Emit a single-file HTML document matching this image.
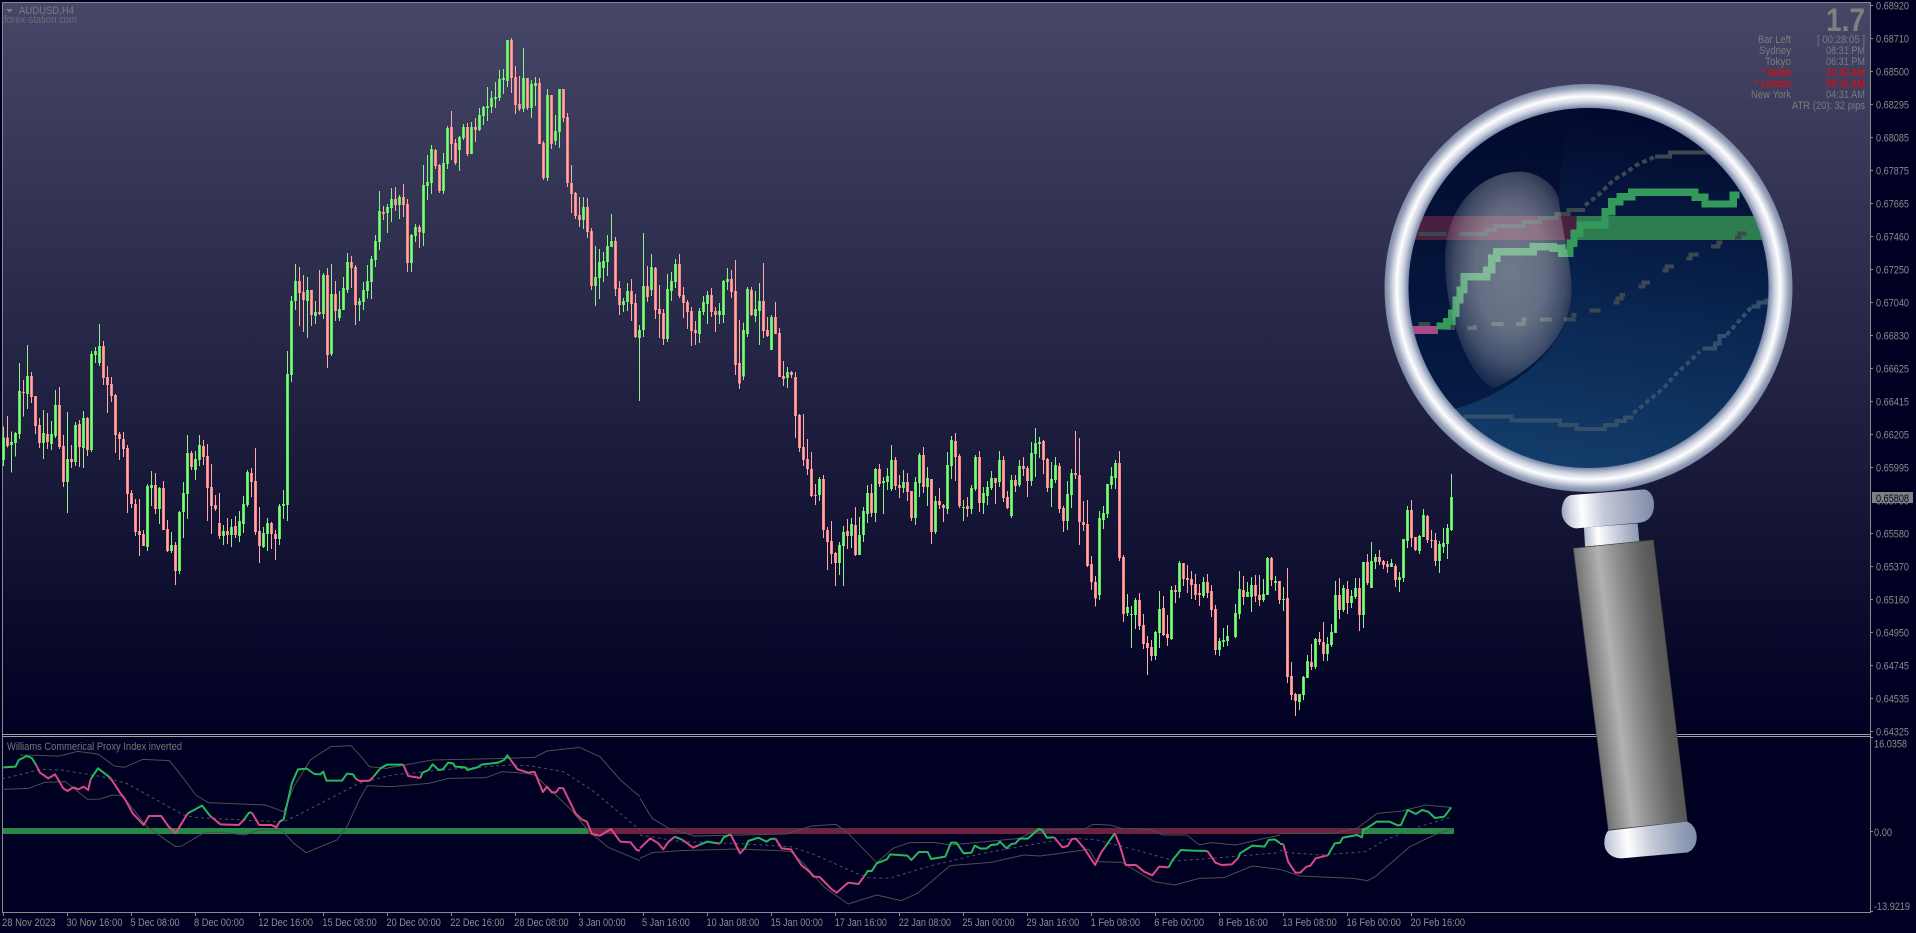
<!DOCTYPE html>
<html><head><meta charset="utf-8"><title>AUDUSD,H4</title>
<style>
html,body{margin:0;padding:0;background:#000022;width:1916px;height:933px;overflow:hidden}
svg{display:block;position:absolute;left:0;top:0}
text{font-family:"Liberation Sans",sans-serif;font-size:11px;fill:#8d8d8d}
.c path{fill:none;shape-rendering:crispEdges}
.gb{stroke:#56e856;stroke-width:9}
.rb{stroke:#f98484;stroke-width:9}
.gw{stroke:#8cf08c;stroke-width:3}
.rw{stroke:#ffaaaa;stroke-width:3}
.i path{fill:none;vector-effect:non-scaling-stroke;stroke-linejoin:round}
.p{stroke:#d94a84;stroke-width:2}
.g{stroke:#28b85c;stroke-width:2}
.o{stroke:#4e4e4e;stroke-width:1}
.d{stroke:#525252;stroke-width:1;stroke-dasharray:3 3}
.t text{fill:#7c7c7c;text-anchor:end}
.t .r{fill:#ff0000}
</style></head><body>
<svg width="1916" height="933" viewBox="0 0 1916 933" xmlns="http://www.w3.org/2000/svg">
<defs>
<linearGradient id="bg" x1="0" y1="3" x2="0" y2="735" gradientUnits="userSpaceOnUse"><stop offset="0" stop-color="#464666"/><stop offset="1" stop-color="#000022"/></linearGradient>
<linearGradient id="glass" x1="800" y1="90" x2="640" y2="1160" gradientUnits="userSpaceOnUse"><stop offset="0" stop-color="#03082c"/><stop offset=".45" stop-color="#07204a"/><stop offset="1" stop-color="#133c6a"/></linearGradient>
<linearGradient id="dark" x1="0" y1="80" x2="0" y2="1000" gradientUnits="userSpaceOnUse"><stop offset="0" stop-color="#030a2e"/><stop offset="1" stop-color="#051c44"/></linearGradient>
<radialGradient id="moon" cx=".52" cy=".45" r=".62"><stop offset="0" stop-color="#dedede" stop-opacity=".5"/><stop offset=".45" stop-color="#dedede" stop-opacity=".44"/><stop offset=".7" stop-color="#dedede" stop-opacity=".28"/><stop offset=".85" stop-color="#dedede" stop-opacity=".12"/><stop offset="1" stop-color="#dedede" stop-opacity="0"/></radialGradient>
<radialGradient id="ring" cx="1588.5" cy="288" r="204" gradientUnits="userSpaceOnUse"><stop offset=".865" stop-color="#5f7299"/><stop offset=".885" stop-color="#7d8caa"/><stop offset=".91" stop-color="#c8cede"/><stop offset=".94" stop-color="#ffffff"/><stop offset=".96" stop-color="#d0d5e0"/><stop offset=".98" stop-color="#9aa4ba"/><stop offset="1" stop-color="#7b88a6"/></radialGradient>
<linearGradient id="h1" x1="65" y1="95" x2="342" y2="75" gradientUnits="userSpaceOnUse"><stop offset="0" stop-color="#9aa3bc"/><stop offset=".1" stop-color="#d5d9e5"/><stop offset=".22" stop-color="#ffffff"/><stop offset=".45" stop-color="#c5cad8"/><stop offset=".75" stop-color="#a0a8be"/><stop offset="1" stop-color="#7e8aa8"/></linearGradient>
<linearGradient id="h2" x1="132" y1="170" x2="298" y2="158" gradientUnits="userSpaceOnUse"><stop offset="0" stop-color="#b0b8cc"/><stop offset=".25" stop-color="#ffffff"/><stop offset=".6" stop-color="#c8cddb"/><stop offset="1" stop-color="#8c96b0"/></linearGradient>
<linearGradient id="h3" x1="100" y1="205" x2="338" y2="175" gradientUnits="userSpaceOnUse"><stop offset="0" stop-color="#727272"/><stop offset=".12" stop-color="#8c8c8c"/><stop offset=".3" stop-color="#b2b2b2"/><stop offset=".55" stop-color="#8a8a8a"/><stop offset=".85" stop-color="#606060"/><stop offset="1" stop-color="#565652"/></linearGradient>
<linearGradient id="h4" x1="193" y1="1095" x2="470" y2="1070" gradientUnits="userSpaceOnUse"><stop offset="0" stop-color="#b8c0d4"/><stop offset=".25" stop-color="#ffffff"/><stop offset=".5" stop-color="#c8ccd8"/><stop offset=".8" stop-color="#97a2ba"/><stop offset="1" stop-color="#7f8dac"/></linearGradient>
<clipPath id="gc"><circle cx="1588" cy="288" r="180.5"/></clipPath>
</defs>

<rect width="1916" height="933" fill="#000022"/>
<rect x="3" y="3" width="1867" height="731" fill="url(#bg)"/>

<!-- frame -->
<g fill="#8a8a8a" shape-rendering="crispEdges">
<rect x="2" y="2" width="1869" height="1"/>
<rect x="2" y="2" width="1" height="911"/>
<rect x="1870" y="2" width="1" height="911"/>
<rect x="2" y="734" width="1869" height="1" fill="#a0a0a0"/>
<rect x="2" y="736" width="1869" height="1" fill="#a0a0a0"/>
<rect x="2" y="912" width="1869" height="1"/>
</g>

<!-- candles -->
<g class="c" transform="translate(.1667 250) scale(.333333)">
<path class="gb" d="M10 562V630M34 576V585M46 549V579M58 423V552M82 378V432M130 549V579M154 552V582M166 465V558M202 627V696M226 525V636M250 504V594M274 312V600M286 303V315M298 288V339M442 708V891M454 705V714M478 714V777M514 885V903M538 786V963M550 729V786M562 609V732M586 627V660M598 585V630M670 843V858M694 831V855M718 813V858M730 762V822M742 666V765M790 849V891M802 819V852M838 768V867M850 762V768M862 372V765M874 153V375M886 93V153M922 120V153M946 186V198M970 75V192M994 132V312M1018 177V204M1030 114V180M1042 36V120M1078 153V165M1090 120V156M1102 93V123M1114 27V96"/>
<path class="rb" d="M22 562V588M70 426V429M94 378V441M106 438V528M118 525V579M142 552V576M178 465V591M190 588V696M214 627V636M238 522V591M262 504V600M310 288V384M322 381V405M334 402V438M346 435V555M358 552V567M370 567V597M382 594V732M394 729V762M406 762V846M418 843V855M430 852V888M466 705V777M490 714V840M502 837V903M526 885V963M574 609V651M610 588V621M622 618V714M634 711V768M646 765V777M658 819V858M682 843V855M706 828V855M754 669V696M766 693V846M778 843V888M814 819V852M826 852V867M898 93V129M910 126V150M934 120V195M958 186V192M982 75V315M1006 132V183M1054 36V54M1066 51V165"/>
<path class="gw" d="M10 530V648M34 544V668M46 546V620M58 339V567M82 285V477M130 480V627M154 513V600M166 420V564M202 486V789M226 516V648M250 483V654M274 303V606M286 291V339M298 222V348M442 702V903M454 663V768M478 711V822M514 846V909M538 783V972M550 696V864M562 555V807M586 603V690M598 555V648M670 825V885M694 807V891M718 783V876M730 738V849M742 660V771M790 831V894M802 804V903M838 762V885M850 720V807M862 303V813M874 138V396M886 42V180M922 81V264M946 153V222M970 69V207M994 42V318M1018 123V213M1030 81V180M1042 9V129M1078 144V213M1090 96V180M1102 45V145M1114 18V147"/>
<path class="rw" d="M22 498V592M70 390V500M94 366V459M106 438V552M118 504V594M142 489V597M178 411V597M190 555V711M214 585V654M238 510V651M262 501V618M310 273V405M322 348V489M334 381V456M346 432V609M358 546V630M370 546V621M382 585V789M394 720V774M406 747V858M418 747V918M430 840V888M466 669V792M490 693V840M502 810V906M526 876V1005M574 603V660M610 570V645M622 582V813M634 642V852M646 735V783M658 729V867M682 804V882M706 798V864M754 654V741M766 594V855M778 771V939M814 816V897M826 840V930M898 51V228M910 75V246M934 120V228M958 60V195M982 54V354M1006 93V213M1054 18V114M1066 45V225"/>
</g>
<g class="c" transform="translate(.1667 0) scale(.333333)">
<path class="gb" d="M1126 723V780M1138 633V726M1162 621V639M1174 597V624M1198 591V615M1234 705V789M1246 681V708M1270 555V699M1282 546V558M1294 447V549M1330 489V573M1342 384V492M1378 411V450M1390 381V414M1414 381V462M1438 345V390"/>
<path class="rb" d="M1150 636V642M1186 597V615M1210 591V615M1222 612V789M1258 681V696M1306 450V498M1318 495V573M1354 381V432M1366 429V489M1402 381V462M1426 381V390"/>
<path class="gw" d="M1126 705V801M1138 573V750M1162 612V699M1174 564V666M1198 585V657M1234 702V816M1246 672V726M1270 495V738M1282 465V600M1294 435V582M1330 459V582M1342 378V507M1378 408V513M1390 372V420M1414 366V462M1438 324V393"/>
<path class="rw" d="M1150 618V660M1186 561V633M1210 552V651M1222 597V816M1258 675V744M1306 447V507M1318 492V579M1354 333V480M1366 417V495M1402 369V468M1426 354V426"/>
</g>
<g class="c" transform="translate(480.1667 30) scale(.333333)">
<path class="gb" d="M10 231V258M22 228V234M34 204V231M46 201V207M58 147V204M70 144V150M82 30V153M130 144V237M154 162V234M166 159V168M202 195V444M226 303V333M238 177V306M310 531V570M346 741V768M358 696V744M370 693V714M382 648V696M394 633V651M430 813V825M442 783V816M478 900V924M490 768V900M514 711V780M562 777V927M574 753V783M586 702V756M658 843V912M670 816V846M682 795V822M718 843V855M730 753V855M742 747V756M790 900V1040M802 777V912M826 837V858M838 813V843M874 861V960"/>
<path class="rb" d="M94 30V144M106 141V225M118 222V237M142 144V234M178 159V342M190 339V444M214 195V342M250 177V264M262 261V459M274 459V492M286 489V558M298 555V570M322 531V606M334 603V768M406 633V777M418 774V825M454 783V822M466 819V921M502 768V801M526 714V840M538 837V852M550 849V927M598 702V798M610 795V819M622 816V846M634 843V903M646 900V909M694 795V846M706 843V855M754 747V786M766 783V1005M778 999V1060M814 780V855M850 813V903M862 900V918M886 861V912M898 909V1041"/>
<path class="gw" d="M10 228V285M22 171V273M34 183V249M46 156V234M58 120V213M70 117V192M82 30V171M130 54V246M154 150V264M166 141V228M202 177V453M226 255V345M238 177V354M310 501V597M346 648V828M358 657V807M370 666V756M382 615V738M394 552V651M430 804V846M442 759V843M478 885V1113M490 609V921M514 672V798M562 732V936M574 726V813M586 687V774M658 834V939M670 798V855M682 783V882M718 819V882M730 750V879M742 714V780M790 877V1050M802 771V921M826 783V876M838 759V945M874 855V960"/>
<path class="rw" d="M94 24V189M106 108V252M118 138V243M142 144V240M178 144V342M190 333V450M214 195V357M250 177V276M262 249V471M274 405V549M286 486V567M298 501V591M322 504V624M334 594V780M406 621V798M418 753V855M454 747V873M466 792V924M502 708V816M526 711V867M538 765V924M550 837V945M598 672V804M610 771V864M622 810V897M634 831V948M646 873V945M694 774V861M706 831V906M754 720V804M766 690V1035M778 870V1077M814 771V858M850 699V924M862 861V921M886 816V912M898 894V1041"/>
</g>
<g class="c" transform="translate(780.1667 250) scale(.333333)">
<path class="gb" d="M22 366V384M118 687V735M178 885V939M190 846V888M214 822V858M238 855V915M250 783V855M262 729V792M286 657V789M310 693V699M322 678V696M334 630V717M370 696V714M406 696V804M418 615V699M442 684V711M466 753V846M502 645V777M514 570V648M550 771V774M574 714V777M586 621V717M610 729V759M622 711V738M634 684V714M658 630V696M694 690V798M718 648V705M754 609V693M766 579V612M778 576V582M814 687V714M826 645V690M862 732V813M874 669V735M958 804V1035"/>
<path class="rb" d="M10 378V387M34 366V375M46 381V498M58 495V594M70 591V630M82 627V657M94 657V738M106 735V738M130 687V840M142 840V876M154 873V912M166 909V939M202 843V858M226 825V915M274 729V789M298 657V702M346 630V708M358 705V714M382 696V726M394 723V804M430 615V711M454 687V846M478 753V765M490 765V774M526 573V621M538 618V768M562 768V777M598 621V759M646 684V699M670 630V744M682 741V774M706 690V708M730 648V657M742 654V693M790 573V630M802 627V714M838 648V777M850 774V813M886 669V675M898 675V816M910 816V825M922 822V948M934 942V996M946 996V1045"/>
<path class="gw" d="M22 351V414M118 681V753M178 876V975M190 828V1008M214 804V894M238 801V915M250 771V876M262 705V819M286 654V816M310 681V792M322 654V720M334 585V723M370 660V729M406 681V825M418 609V741M442 651V768M466 738V852M502 606V792M514 558V687M550 750V813M574 705V792M586 615V723M610 711V792M622 693V765M634 663V720M658 603V711M694 675V804M718 630V711M754 576V708M766 534V681M778 561V624M814 636V771M826 621V699M862 693V840M874 657V774M958 783V1050"/>
<path class="rw" d="M10 333V408M34 363V384M46 366V564M58 492V606M70 492V648M82 567V675M94 606V741M106 702V765M130 675V864M142 831V960M154 813V942M166 906V1008M202 807V897M226 771V918M274 702V801M298 642V711M346 621V720M358 675V744M382 669V753M394 723V813M430 591V729M454 687V882M478 714V777M490 762V816M526 549V693M538 612V774M562 741V801M598 603V786M646 684V762M670 618V756M682 723V777M706 675V726M730 621V678M742 648V741M790 570V672M802 624V726M838 639V789M850 768V846M886 543V687M898 564V885M910 753V843M922 750V951M934 918V1020M946 978V1070"/>
</g>
<g class="c" transform="translate(1100.1667 420) scale(.333333)">
<path class="gb" d="M10 279V300M22 192V282M34 168V195M46 129V174M82 561V579M94 582V585M106 540V585M166 636V708M178 567V639M214 510V657M238 429V516M310 486V528M358 663V690M370 660V666M382 648V663M406 579V651M418 507V582M442 516V531M454 495V531M490 522V540M502 414V525M526 483V489M550 537V540M598 822V846M610 771V825M622 723V774M646 657V741M682 672V702M694 636V675M706 525V639M730 504V570M754 528V549M766 504V531M790 426V585M814 423V504M826 411V426M874 429V441M898 471V480M910 357V474M922 270V363M958 348V393M970 285V351M1018 372V423M1030 369V381M1042 324V372M1054 231V330"/>
<path class="rb" d="M58 129V414M70 411V582M118 540V618M130 615V672M142 669V684M154 681V708M190 564V645M202 642V654M226 510V516M250 429V477M262 474V480M274 477V495M286 492V525M298 519V525M322 486V519M334 513V570M346 567V690M430 510V531M466 495V528M478 525V540M514 414V480M538 483V540M562 534V771M574 768V825M586 822V843M634 726V741M658 657V666M670 666V702M718 525V570M742 507V549M778 504V585M802 426V489M838 411V426M850 423V435M862 432V441M886 438V480M934 270V354M946 351V390M982 288V360M994 360V363M1006 360V423"/>
<path class="gw" d="M10 258V327M22 192V294M34 141V207M46 120V207M82 522V588M94 558V684M106 534V627M166 633V720M178 513V684M214 498V660M238 423V534M310 471V534M358 654V708M370 624V681M382 615V678M406 552V654M418 453V597M442 486V531M454 471V576M490 477V546M502 411V525M526 468V513M550 501V573M598 822V870M610 768V840M622 705V774M646 654V747M682 651V723M694 612V681M706 483V639M730 495V576M754 510V564M766 474V537M790 426V624M814 366V504M826 402V447M874 417V441M898 456V516M910 357V486M922 258V384M958 345V402M970 267V351M1018 363V459M1030 324V399M1042 312V417M1054 162V333"/>
<path class="rw" d="M58 93V423M70 405V606M118 519V630M130 582V687M142 648V765M154 660V723M190 528V648M202 585V678M226 495V549M250 429V498M262 435V519M274 453V537M286 462V540M298 492V558M322 462V534M334 495V591M346 555V705M430 468V555M466 465V546M478 465V558M514 411V498M538 483V552M562 444V789M574 726V840M586 819V888M634 672V750M658 636V675M670 606V723M718 474V597M742 483V582M778 474V633M802 402V495M838 390V435M850 420V447M862 423V459M886 432V501M934 240V381M946 351V393M982 285V369M994 330V384M1006 339V438"/>
</g>

<!-- indicator bands -->
<g shape-rendering="crispEdges">
<rect x="3" y="828" width="585" height="6" fill="#27884a"/>
<rect x="588" y="828" width="774" height="6" fill="#6a2340"/>
<rect x="1362" y="828" width="92" height="6" fill="#27884a"/>
</g>

<!-- indicator lines -->
<g class="i" transform="translate(0 730) scale(.40816 .33333)">
<path class="o" d="M50 75L145 78L190 64L240 72L280 108L305 112L350 88L415 92L440 130L480 195L510 218L650 225L695 245M695 245L720 170L760 90L810 50L860 47L885 80L905 110L945 115L1060 90L1240 85L1310 82L1340 63L1420 52L1470 80L1520 150L1568 200"/>
<path class="o" d="M5 178L70 175L110 157L160 155L215 208L245 207L275 195L300 197L360 290L430 350L445 348L500 308L550 307L600 315L635 300L690 300L720 340L750 368L825 330L850 290L880 210L900 167L960 170L1050 160L1100 145L1190 143L1230 125L1290 130L1310 135L1340 170L1400 240L1440 300L1490 352L1568 392"/>
<path class="d" d="M5 147L45 135L100 118L150 120L250 140L310 160L450 255L475 262L620 272L695 275L730 255L880 160L960 135L1100 118L1250 105L1300 108L1380 125L1450 180L1568 300"/>
<path class="g" d="M8 112L38 110L46 90L66 78L78 84L88 104M222 148L240 115L270 143M460 250L495 227L515 258M597 270L610 248L617 248M685 275L695 268L715 160L730 118L752 116L770 132L785 133L792 125L800 152L838 152L850 131L865 133L872 147M915 140L932 115L948 104L988 104M1030 144L1035 128L1050 120L1060 103L1075 120L1085 118L1098 98L1110 100L1115 110L1140 112L1145 120L1170 112L1180 104L1220 98L1235 90L1243 76L1250 88"/>
<path class="p" d="M88 104L98 128L118 145L135 133L155 175L165 183L180 172L192 178L205 170L216 180L222 148M270 143L295 190L305 205L325 250L352 285L365 258L395 258L412 288L430 310L460 250M515 258L540 283L585 285L597 270M617 248L635 285L665 285L677 292L685 275M872 147L882 153L905 152L915 140M988 104L1000 138L1030 144M1250 88L1268 118L1295 128L1310 126L1330 186L1340 170L1352 187L1362 187L1370 174L1380 175L1410 250L1425 268L1438 275L1450 312L1470 317L1497 297L1520 335L1545 337L1560 360L1568 362"/>
</g>
<g class="i" transform="translate(640 730) scale(.40816 .33333)">
<path class="o" d="M0 205L30 265L70 295L135 318L360 312L420 288L480 283L510 310L580 398L620 355L660 338L720 337L760 345L930 325L970 300L1090 297L1110 283L1150 285L1180 295L1250 298L1280 315L1340 315L1370 345L1400 338L1460 345L1530 325L1568 315"/>
<path class="o" d="M0 385L30 368L100 362L240 357L340 362L370 365L400 400L450 470L510 522L580 495L640 512L680 490L760 407L860 397L940 375L980 378L1100 358L1118 395L1180 397L1260 455L1310 465L1370 445L1430 443L1500 408L1568 418"/>
<path class="d" d="M0 315L100 335L230 340L370 350L430 375L530 430L560 443L610 445L720 405L840 370L1000 335L1070 325L1120 330L1230 365L1310 393L1400 385L1568 368"/>
<path class="g" d="M85 320L105 330M145 345L165 335L190 340M197 340L205 322L222 313M257 355L265 333L290 323L310 335L320 327L332 326M550 438L558 423L568 423L580 400L605 388L613 373L655 377L665 390L683 366L705 366L713 387L748 380L762 338L775 338L793 370L812 368L820 347L835 356L850 355L860 345L875 343L882 335L898 355L910 342L920 340L930 326L950 326L977 297L985 300L997 323L1015 322M1140 350L1163 310M1295 412L1305 390L1325 360L1355 362L1390 363M1465 385L1470 370L1500 347L1530 350L1540 330L1555 328L1568 340"/>
<path class="p" d="M0 355L25 325L45 340L57 358L70 335L85 320M105 330L130 353L145 345M190 340L197 340M222 313L235 345L245 370L257 355M332 326L347 355L370 358L395 405L415 425L425 440L440 441L470 478L482 488L510 458L535 462L550 438M1015 322L1035 352L1048 348L1058 327L1068 326L1088 355L1115 405L1130 367L1140 350M1163 310L1175 345L1190 405L1215 405L1235 425L1255 436L1272 410L1295 412M1390 363L1410 398L1425 405L1450 403L1465 385"/>
</g>
<g class="i" transform="translate(1280 730) scale(.4057 .33333)">
<path class="o" d="M0 310L130 310L190 295L240 250L300 243L360 225L420 232"/>
<path class="o" d="M0 418L50 438L180 445L215 452L235 440L320 350L380 315L425 295"/>
<path class="d" d="M0 360L20 368L100 375L210 365L260 330L330 295L420 262"/>
<path class="g" d="M0 342L8 342M118 376L135 340L148 338L155 323L190 315L202 322L205 300L220 290L238 275L270 275L290 286L298 285L315 240L335 252L350 240L365 245L382 264L405 260L422 232"/>
<path class="p" d="M8 342L20 395L38 428L50 428L65 410L75 407L88 385L118 376"/>
</g>

<!-- chart labels -->
<path d="M6 9H13L9.5 13Z" fill="#7a7a80"/>
<text x="19" y="14" textLength="55" lengthAdjust="spacingAndGlyphs" style="fill:#7b7b85">AUDUSD,H4</text>
<text x="4" y="23" textLength="73" lengthAdjust="spacingAndGlyphs" style="fill:#6c6c7c">forex-station.com</text>
<text x="7" y="750" textLength="175" lengthAdjust="spacingAndGlyphs" style="fill:#777">Williams Commerical Proxy Index inverted</text>

<!-- top-right info -->
<g class="t">
<text x="1865" y="31" textLength="39" lengthAdjust="spacingAndGlyphs" style="font-size:32px;font-weight:bold;fill:#808080">1.7</text>
<text x="1791" y="43" textLength="33" lengthAdjust="spacingAndGlyphs">Bar Left</text>
<text x="1865" y="43" textLength="48" lengthAdjust="spacingAndGlyphs">[ 00:28:05 ]</text>
<text x="1791" y="54" textLength="32" lengthAdjust="spacingAndGlyphs">Sydney</text>
<text x="1865" y="54" textLength="39" lengthAdjust="spacingAndGlyphs">08:31 PM</text>
<text x="1791" y="65" textLength="26" lengthAdjust="spacingAndGlyphs">Tokyo</text>
<text x="1865" y="65" textLength="39" lengthAdjust="spacingAndGlyphs">06:31 PM</text>
<text class="r" x="1791" y="76" textLength="29" lengthAdjust="spacingAndGlyphs">* Berlin</text>
<text class="r" x="1865" y="76" textLength="39" lengthAdjust="spacingAndGlyphs">10:31 AM</text>
<text class="r" x="1791" y="87" textLength="36" lengthAdjust="spacingAndGlyphs">* London</text>
<text class="r" x="1865" y="87" textLength="39" lengthAdjust="spacingAndGlyphs">09:31 AM</text>
<text x="1791" y="98" textLength="40" lengthAdjust="spacingAndGlyphs">New York</text>
<text x="1865" y="98" textLength="39" lengthAdjust="spacingAndGlyphs">04:31 AM</text>
<text x="1865" y="109" textLength="73" lengthAdjust="spacingAndGlyphs">ATR (20): 32 pips</text>
</g>

<!-- price axis ticks -->
<path stroke="#8a8a8a" fill="none" shape-rendering="crispEdges" d="M1871 5.5h2M1871 38.5h2M1871 71.5h2M1871 104.5h2M1871 137.5h2M1871 170.5h2M1871 203.5h2M1871 236.5h2M1871 269.5h2M1871 302.5h2M1871 335.5h2M1871 368.5h2M1871 401.5h2M1871 434.5h2M1871 467.5h2M1871 533.5h2M1871 566.5h2M1871 599.5h2M1871 632.5h2M1871 665.5h2M1871 698.5h2M1871 731.5h2M1871 737.5h2M1871 831.5h2M1871 911.5h2"/>
<!-- price axis -->
<g>
<text x="1876" y="9.5" textLength="33" lengthAdjust="spacingAndGlyphs">0.68920</text>
<text x="1876" y="42.5" textLength="33" lengthAdjust="spacingAndGlyphs">0.68710</text>
<text x="1876" y="75.5" textLength="33" lengthAdjust="spacingAndGlyphs">0.68500</text>
<text x="1876" y="108.5" textLength="33" lengthAdjust="spacingAndGlyphs">0.68295</text>
<text x="1876" y="141.5" textLength="33" lengthAdjust="spacingAndGlyphs">0.68085</text>
<text x="1876" y="174.5" textLength="33" lengthAdjust="spacingAndGlyphs">0.67875</text>
<text x="1876" y="207.5" textLength="33" lengthAdjust="spacingAndGlyphs">0.67665</text>
<text x="1876" y="240.5" textLength="33" lengthAdjust="spacingAndGlyphs">0.67460</text>
<text x="1876" y="273.5" textLength="33" lengthAdjust="spacingAndGlyphs">0.67250</text>
<text x="1876" y="306.5" textLength="33" lengthAdjust="spacingAndGlyphs">0.67040</text>
<text x="1876" y="339.5" textLength="33" lengthAdjust="spacingAndGlyphs">0.66830</text>
<text x="1876" y="372.5" textLength="33" lengthAdjust="spacingAndGlyphs">0.66625</text>
<text x="1876" y="405.5" textLength="33" lengthAdjust="spacingAndGlyphs">0.66415</text>
<text x="1876" y="438.5" textLength="33" lengthAdjust="spacingAndGlyphs">0.66205</text>
<text x="1876" y="471.5" textLength="33" lengthAdjust="spacingAndGlyphs">0.65995</text>
<text x="1876" y="504.5" textLength="33" lengthAdjust="spacingAndGlyphs">0.65790</text>
<text x="1876" y="537.5" textLength="33" lengthAdjust="spacingAndGlyphs">0.65580</text>
<text x="1876" y="570.5" textLength="33" lengthAdjust="spacingAndGlyphs">0.65370</text>
<text x="1876" y="603.5" textLength="33" lengthAdjust="spacingAndGlyphs">0.65160</text>
<text x="1876" y="636.5" textLength="33" lengthAdjust="spacingAndGlyphs">0.64950</text>
<text x="1876" y="669.5" textLength="33" lengthAdjust="spacingAndGlyphs">0.64745</text>
<text x="1876" y="702.5" textLength="33" lengthAdjust="spacingAndGlyphs">0.64535</text>
<text x="1876" y="735.5" textLength="33" lengthAdjust="spacingAndGlyphs">0.64325</text>
<rect x="1872" y="492" width="41" height="11" fill="#808080" shape-rendering="crispEdges"/>
<text x="1876" y="502" textLength="33" lengthAdjust="spacingAndGlyphs" style="fill:#000022">0.65808</text>
<text x="1874" y="747.5" textLength="33" lengthAdjust="spacingAndGlyphs">16.0358</text>
<text x="1874" y="836" textLength="18" lengthAdjust="spacingAndGlyphs">0.00</text>
<text x="1874" y="910" textLength="36" lengthAdjust="spacingAndGlyphs">-13.9219</text>
</g>

<!-- time axis -->
<path stroke="#8a8a8a" fill="none" shape-rendering="crispEdges" d="M3.5 912v4M67.5 912v4M131.5 912v4M195.5 912v4M259.5 912v4M323.5 912v4M387.5 912v4M451.5 912v4M515.5 912v4M579.5 912v4M643.5 912v4M707.5 912v4M771.5 912v4M835.5 912v4M899.5 912v4M963.5 912v4M1027.5 912v4M1091.5 912v4M1155.5 912v4M1219.5 912v4M1283.5 912v4M1347.5 912v4M1411.5 912v4"/>
<g>
<text x="2" y="926" textLength="53.5" lengthAdjust="spacingAndGlyphs">28 Nov 2023</text>
<text x="66.5" y="926" textLength="56" lengthAdjust="spacingAndGlyphs">30 Nov 16:00</text>
<text x="130.6" y="926" textLength="49" lengthAdjust="spacingAndGlyphs">5 Dec 08:00</text>
<text x="194" y="926" textLength="50" lengthAdjust="spacingAndGlyphs">8 Dec 00:00</text>
<text x="258.4" y="926" textLength="54.6" lengthAdjust="spacingAndGlyphs">12 Dec 16:00</text>
<text x="322.4" y="926" textLength="54.3" lengthAdjust="spacingAndGlyphs">15 Dec 08:00</text>
<text x="386.5" y="926" textLength="54.3" lengthAdjust="spacingAndGlyphs">20 Dec 00:00</text>
<text x="450.2" y="926" textLength="54.3" lengthAdjust="spacingAndGlyphs">22 Dec 16:00</text>
<text x="514.3" y="926" textLength="54.3" lengthAdjust="spacingAndGlyphs">28 Dec 08:00</text>
<text x="578.4" y="926" textLength="47.3" lengthAdjust="spacingAndGlyphs">3 Jan 00:00</text>
<text x="642" y="926" textLength="47.8" lengthAdjust="spacingAndGlyphs">5 Jan 16:00</text>
<text x="706.5" y="926" textLength="52.7" lengthAdjust="spacingAndGlyphs">10 Jan 08:00</text>
<text x="770.6" y="926" textLength="52.3" lengthAdjust="spacingAndGlyphs">15 Jan 00:00</text>
<text x="834.7" y="926" textLength="52.2" lengthAdjust="spacingAndGlyphs">17 Jan 16:00</text>
<text x="898.8" y="926" textLength="52.2" lengthAdjust="spacingAndGlyphs">22 Jan 08:00</text>
<text x="962.4" y="926" textLength="52.3" lengthAdjust="spacingAndGlyphs">25 Jan 00:00</text>
<text x="1026.5" y="926" textLength="52.7" lengthAdjust="spacingAndGlyphs">29 Jan 16:00</text>
<text x="1090.6" y="926" textLength="49.4" lengthAdjust="spacingAndGlyphs">1 Feb 08:00</text>
<text x="1154.3" y="926" textLength="49.7" lengthAdjust="spacingAndGlyphs">6 Feb 00:00</text>
<text x="1218.4" y="926" textLength="49.4" lengthAdjust="spacingAndGlyphs">8 Feb 16:00</text>
<text x="1282.4" y="926" textLength="54.4" lengthAdjust="spacingAndGlyphs">13 Feb 08:00</text>
<text x="1346.5" y="926" textLength="54.4" lengthAdjust="spacingAndGlyphs">16 Feb 00:00</text>
<text x="1410.6" y="926" textLength="54.4" lengthAdjust="spacingAndGlyphs">20 Feb 16:00</text>
</g>

<!-- magnifier handle -->
<g transform="translate(1540 480) scale(.333333)">
<path d="M132 143L293 130L298 185L135 200Z" fill="url(#h2)"/>
<path d="M95 45L312 28C330 30 342 50 342 75C342 105 325 125 300 128L108 145C85 143 65 120 65 95C65 70 75 48 95 45Z" fill="url(#h1)"/>
<path d="M100 205L340 180L442 1025L205 1050Z" fill="url(#h3)" stroke="#45453f" stroke-width="2"/>
<path d="M205 1052L440 1025C458 1030 470 1050 470 1072C470 1098 455 1115 438 1118L245 1135C215 1135 193 1115 193 1090C193 1072 197 1060 205 1052Z" fill="url(#h4)"/>
</g>

<!-- magnifier glass -->
<g clip-path="url(#gc)">
<g transform="translate(1380 80) scale(.333333)">
<rect x="60" y="60" width="1130" height="1130" fill="url(#glass)"/>
<path d="M60 60L582 60C540 250 530 340 540 430C555 520 578 570 575 640C570 790 420 930 230 985L60 1060Z" fill="url(#dark)"/>
<g shape-rendering="crispEdges">
<rect x="60" y="408" width="530" height="72" fill="#4a2040"/>
<rect x="590" y="408" width="600" height="72" fill="#2e7d50"/>
<rect x="60" y="738" width="114" height="24" fill="#a84a86"/>
<g fill="none">
<path stroke="#3c4850" stroke-width="12" d="M115 462H200M240 462H320V450H345V438H430V426H480V414H530V402H565V390H615"/>
<path stroke="#3c4850" stroke-width="12" stroke-dasharray="14 10" d="M615 376L655 345L700 300L735 280L770 255L825 230"/>
<path stroke="#3c4850" stroke-width="12" d="M825 230H870V218H985"/>
<path stroke="#3c4850" stroke-width="12" d="M115 732H150M200 744H225M262 744H285V735M335 732H370M408 732H430V718H440M480 718H515M552 718H580V705H590M628 692H662M700 668H712V656H724V645H735M775 620H790V608H810M848 572H860V560H882M920 535H932V523H955M993 500H1016V488H1028M1065 472H1078V460H1100"/>
<path stroke="#33506a" stroke-width="12" d="M250 1010H395V1022H540V1035H590V1047H675V1035H710V1023H735V1012H760"/>
<path stroke="#33506a" stroke-width="12" stroke-dasharray="14 10" d="M760 1000L850 925L885 885L960 815"/>
<path stroke="#33506a" stroke-width="12" d="M968 805H1005V790H1018V768H1040"/>
<path stroke="#33506a" stroke-width="12" stroke-dasharray="14 10" d="M1040 765L1115 680"/>
<path stroke="#33506a" stroke-width="12" d="M1115 680H1135V668H1160V655"/>
<path stroke="#339a5c" stroke-width="22" stroke-linejoin="miter" d="M170 738H200V725H215V700H228V660H240V630H252V590H320V570H335V535H350V515H460V500H490H520V505H545V520H570V490H582V460H600V435H675V395H695V365H720V350H755V337H945V352H975V372H1060V345H1078"/>
</g>
</g>
<path fill="url(#moon)" d="M195 540C195 380 300 275 420 275C470 275 520 310 535 350C545 440 575 560 575 630C575 780 440 880 340 925C260 880 195 700 195 540Z"/>
</g>
</g>
<circle cx="1588.5" cy="288" r="192" fill="none" stroke="url(#ring)" stroke-width="24"/>
</svg>
</body></html>
